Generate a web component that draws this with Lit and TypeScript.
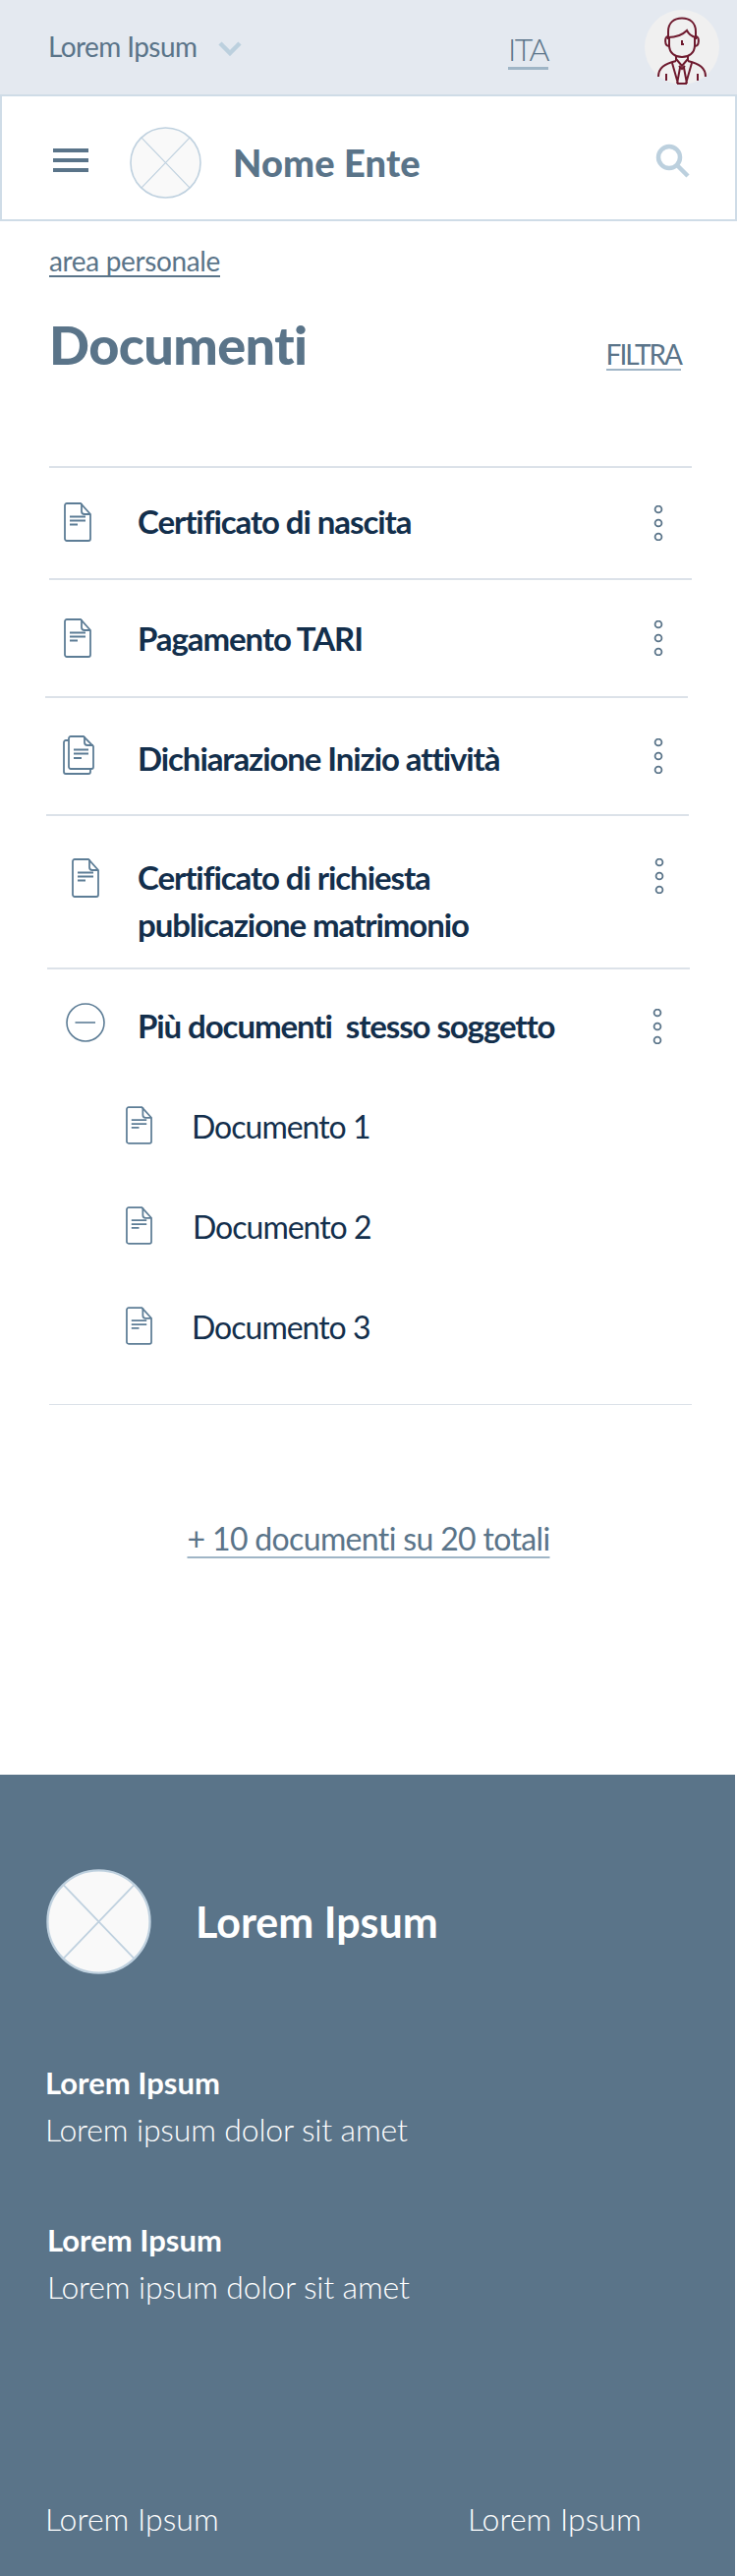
import { LitElement, html, css, svg } from 'lit';
import { customElement } from 'lit/decorators.js';

const docIcon = svg`
  <path d="M3 1H17L27 12V37a2 2 0 0 1-2 2H3a2 2 0 0 1-2-2V3a2 2 0 0 1 2-2Z" />
  <path d="M18 1V9a3 3 0 0 0 3 3H27" />
  <path d="M6 14.5H22M6 18.5H22M6 22.5H14" />
`;

const stackIcon = svg`
  <path d="M8 1H21L31 11V32a2 2 0 0 1-2 2H8a2 2 0 0 1-2-2V3a2 2 0 0 1 2-2Z" />
  <path d="M22 1V7a3 3 0 0 0 3 3H31" />
  <path d="M6 5H3a2 2 0 0 0-2 2V37a2 2 0 0 0 2 2H26a2 2 0 0 0 2-2V34" />
  <path d="M11 14.5H26M11 18.5H26M11 23H19" />
`;

/**
 * Placeholder logo: pale disc crossed by two lines
 */
function logo(size: string) {
    return html`
      <svg class="logo ${size}" viewBox="0 0 74 74">
        <circle cx="37" cy="37" r="36" fill="#f9f9f9" stroke="#bfd1df" stroke-width="1.6" />
        <path d="M12 11L62 63M62 11L12 63" stroke="#bfd1df" stroke-width="1.2" fill="none" />
      </svg>
    `;
}

function dots() {
    return html`
      <svg class="dots" viewBox="0 0 10 36">
        <circle cx="5" cy="4" r="3.4" /><circle cx="5" cy="18" r="3.4" /><circle cx="5" cy="32" r="3.4" />
      </svg>
    `;
}

@customElement('app-root')
export class AppRoot extends LitElement {
    static styles = css`
    :host {
      display: block;
      width: 750px;
      height: 2620px;
      overflow: hidden;
      background: #fff;
      font-family: Lato, 'Open Sans', sans-serif;
      color: #5a7489;
    }

    .topbar {
      display: flex;
      align-items: center;
      height: 96px;
      padding: 0 18px 0 49px;
      background: #e4e9f0;
    }

    .org {
      font-size: 28px;
      font-weight: 400;
      letter-spacing: -0.6px;
      margin-top: -2px;
    }

    .chevron {
      width: 24px;
      height: 15px;
      margin: 2px 0 0 22px;
      fill: none;
      stroke: #bcd0de;
      stroke-width: 4.5;
    }

    .lang {
      margin: 6px 98px 0 auto;
      font-size: 32px;
      font-weight: 300;
      line-height: 36px;
      letter-spacing: -1.5px;
      border-bottom: 3px solid #9fb5c6;
    }

    .avatar {
      width: 76px;
      height: 76px;
      flex: none;
    }

    .header {
      display: flex;
      align-items: center;
      box-sizing: border-box;
      height: 129px;
      padding: 0 45px 0 52px;
      border: 2px solid #cfdce7;
    }

    .burger {
      display: flex;
      flex-direction: column;
      gap: 6px;
      width: 36px;
      margin: 5px 42px 0 0;
    }

    .burger span {
      height: 4px;
      background: #5a7489;
    }

    .logo {
      flex: none;
    }

    .logo.small {
      width: 73px;
      height: 73px;
      margin-top: 9px;
    }

    .logo.big {
      width: 107px;
      height: 107px;
    }

    .name {
      margin: 8px 0 0 32px;
      font-size: 38px;
      font-weight: 900;
      letter-spacing: 0.15px;
    }

    .search {
      width: 36px;
      height: 35px;
      margin: 5px 0 0 auto;
      fill: none;
      stroke: #bcd0de;
      stroke-width: 4.5;
    }

    .crumb {
      display: inline-block;
      margin: 25px 0 0 50px;
      font-size: 28px;
      font-weight: 400;
      letter-spacing: -0.35px;
      line-height: 30px;
      border-bottom: 2px solid #5a7489;
    }

    .title-row {
      display: flex;
      justify-content: space-between;
      align-items: flex-end;
      padding: 0 57px 0 50px;
      margin-top: 32px;
    }

    h1 {
      margin: 0;
      font-size: 54px;
      font-weight: 900;
      letter-spacing: -0.6px;
      line-height: 74px;
    }

    .filter {
      margin-bottom: 11px;
      font-size: 28px;
      font-weight: 400;
      letter-spacing: -2px;
      line-height: 30px;
      border-bottom: 2px solid #9fb5c6;
    }

    .spacer {
      height: 87px;
    }

    .row {
      display: flex;
      align-items: flex-start;
      box-sizing: border-box;
      height: var(--h);
    }

    .row::before {
      content: '';
      position: absolute;
      left: var(--rule);
      width: 654px;
      height: 2px;
      margin-top: -1px;
      background: #dce2e9;
    }

    .r1 { --h: 114px; --rule: 50px; --ix: 65px; --iy: 36px; --ty: 31px; --dy: 39px; }
    .r2 { --h: 120px; --rule: 50px; --ix: 65px; --iy: 40px; --ty: 36px; --dy: 42px; }
    .r3 { --h: 120px; --rule: 46px; --ix: 64px; --iy: 39px; --ty: 38px; --dy: 42px; }
    .r4 { --h: 156px; --rule: 47px; --ix: 73px; --iy: 44px; --ty: 39px; --dy: 44px; --dx: 1px; }
    .r5 { --h: 135px; --rule: 48px; --ix: 67px; --iy: 35px; --ty: 34px; --dy: 41px; --dx: -1px; }

    .slot {
      flex: none;
      box-sizing: border-box;
      width: 140px;
      padding: var(--iy) 0 0 var(--ix);
    }

    .slot svg {
      display: block;
    }

    .doc {
      width: 28px;
      height: 40px;
      fill: none;
      stroke: #5d7d96;
      stroke-width: 1.8;
    }

    .doc.stack {
      width: 32px;
    }

    .minus {
      width: 40px;
      height: 40px;
      fill: none;
      stroke: #5d7d96;
      stroke-width: 1.6;
    }

    .label {
      margin-top: var(--ty);
      font-size: 33px;
      font-weight: 700;
      letter-spacing: -1.08px;
      line-height: 48px;
      color: #132f4c;
      white-space: pre;
    }

    .dots {
      flex: none;
      width: 10px;
      height: 36px;
      margin: var(--dy) 0 0 auto;
      position: relative;
      left: var(--dx, 0);
      fill: none;
      stroke: #5a7489;
      stroke-width: 1.8;
    }

    .kebab {
      margin-left: auto;
      padding-right: 75px;
    }

    .sub {
      display: flex;
      align-items: flex-start;
      height: 102px;
      padding-left: 128px;
    }

    .sub .doc {
      flex: none;
      width: 27px;
      height: 39px;
      margin: 5px 40px 0 0;
    }

    .sub span {
      margin-top: 2px;
      font-size: 32px;
      font-weight: 400;
      letter-spacing: -1px;
      line-height: 48px;
      color: #132f4c;
    }

    .sub span.shift {
      margin-left: 1px;
    }

    .end-rule {
      height: 1px;
      margin: 2px 46px 0 50px;
      background: #dce2e9;
    }

    .more {
      margin-top: 112px;
      text-align: center;
      font-size: 32px;
      font-weight: 400;
      letter-spacing: -0.65px;
      line-height: 48px;
    }

    .more a {
      text-decoration: underline 2px #9fb5c6;
      text-underline-offset: 6px;
      text-decoration-skip-ink: none;
    }

    footer {
      box-sizing: border-box;
      width: 748px;
      height: 816px;
      margin-top: 216px;
      padding: 96px 0 0 46px;
      background: #5a7489;
      color: #fff;
    }

    .brand {
      display: flex;
      align-items: center;
      gap: 45px;
      font-size: 43px;
      font-weight: 700;
    }

    .brand .logo {
      margin-left: 1px;
    }

    .block {
      margin-top: 88px;
    }

    .block + .block {
      margin: 66px 0 0 2px;
    }

    .block strong {
      display: block;
      font-size: 31px;
      font-weight: 700;
      line-height: 44px;
    }

    .block span {
      display: block;
      margin-top: 2px;
      font-size: 32px;
      font-weight: 300;
      letter-spacing: -0.18px;
      line-height: 48px;
    }

    .legal {
      display: grid;
      grid-template-columns: 430px auto;
      margin-top: 188px;
      font-size: 32px;
      font-weight: 300;
      line-height: 48px;
    }
  `;

    render() {
        return html`
      <div class="topbar">
        <span class="org">Lorem Ipsum</span>
        <svg class="chevron" viewBox="0 0 24 15"><path d="M2 2L12 12L22 2" /></svg>
        <span class="lang">ITA</span>
        <svg class="avatar" viewBox="0 0 76 76">
          <circle cx="38" cy="38" r="38" fill="#f0f0f0" />
          <g fill="none" stroke="#6e1a2e" stroke-width="2">
            <path d="M24 30V22C24 13 30 8.5 38 8.5C46 8.5 52 13 52 22V30" />
            <path d="M24 28C32 28 38 26 43 21C45 25 48 27 52 28" />
            <path d="M25 27V36C25 44 31 48 38 48C45 48 51 44 51 36V27" />
            <path d="M24 27C20 27 20 37 25 37M52 27C56 27 56 37 51 37" />
            <path d="M38 31V35H40M32 46V52M44 46V52M32 50L38 57L44 50" />
            <path d="M14 68C14 59 20 55 32 52M44 52C56 55 62 59 62 68" />
            <path d="M35 57L38 60L41 57M36 59L33 75M40 59L43 75M28 54L34 75M48 54L42 75M33 75H43" />
            <path d="M22 65V72M54 65V72" />
          </g>
        </svg>
      </div>

      <div class="header">
        <div class="burger"><span></span><span></span><span></span></div>
        ${logo('small')}
        <span class="name">Nome Ente</span>
        <svg class="search" viewBox="0 0 36 35">
          <circle cx="14" cy="14" r="11" /><path d="M22 22L33 33" />
        </svg>
      </div>

      <a class="crumb">area personale</a>
      <div class="title-row">
        <h1>Documenti</h1>
        <a class="filter">FILTRA</a>
      </div>

      <div class="spacer"></div>

      <div class="row r1">
        <div class="slot"><svg class="doc" viewBox="0 0 28 40">${docIcon}</svg></div>
        <div class="label">Certificato di nascita</div>
        <div class="kebab">${dots()}</div>
      </div>
      <div class="row r2">
        <div class="slot"><svg class="doc" viewBox="0 0 28 40">${docIcon}</svg></div>
        <div class="label">Pagamento TARI</div>
        <div class="kebab">${dots()}</div>
      </div>
      <div class="row r3">
        <div class="slot"><svg class="doc stack" viewBox="0 0 32 40">${stackIcon}</svg></div>
        <div class="label">Dichiarazione Inizio attività</div>
        <div class="kebab">${dots()}</div>
      </div>
      <div class="row r4">
        <div class="slot"><svg class="doc" viewBox="0 0 28 40">${docIcon}</svg></div>
        <div class="label">Certificato di richiesta
publicazione matrimonio</div>
        <div class="kebab">${dots()}</div>
      </div>
      <div class="row r5">
        <div class="slot">
          <svg class="minus" viewBox="0 0 40 40">
            <circle cx="20" cy="20" r="19" /><path d="M9.5 20H30" />
          </svg>
        </div>
        <div class="label">Più documenti  stesso soggetto</div>
        <div class="kebab">${dots()}</div>
      </div>

      <div class="sub">
        <svg class="doc" viewBox="0 0 28 40">${docIcon}</svg><span>Documento 1</span>
      </div>
      <div class="sub">
        <svg class="doc" viewBox="0 0 28 40">${docIcon}</svg><span class="shift">Documento 2</span>
      </div>
      <div class="sub">
        <svg class="doc" viewBox="0 0 28 40">${docIcon}</svg><span>Documento 3</span>
      </div>
      <div class="end-rule"></div>

      <div class="more"><a>+ 10 documenti su 20 totali</a></div>

      <footer>
        <div class="brand">${logo('big')}<span>Lorem Ipsum</span></div>
        <div class="block"><strong>Lorem Ipsum</strong><span>Lorem ipsum dolor sit amet</span></div>
        <div class="block"><strong>Lorem Ipsum</strong><span>Lorem ipsum dolor sit amet</span></div>
        <div class="legal"><span>Lorem Ipsum</span><span>Lorem Ipsum</span></div>
      </footer>
    `;
    }
}
